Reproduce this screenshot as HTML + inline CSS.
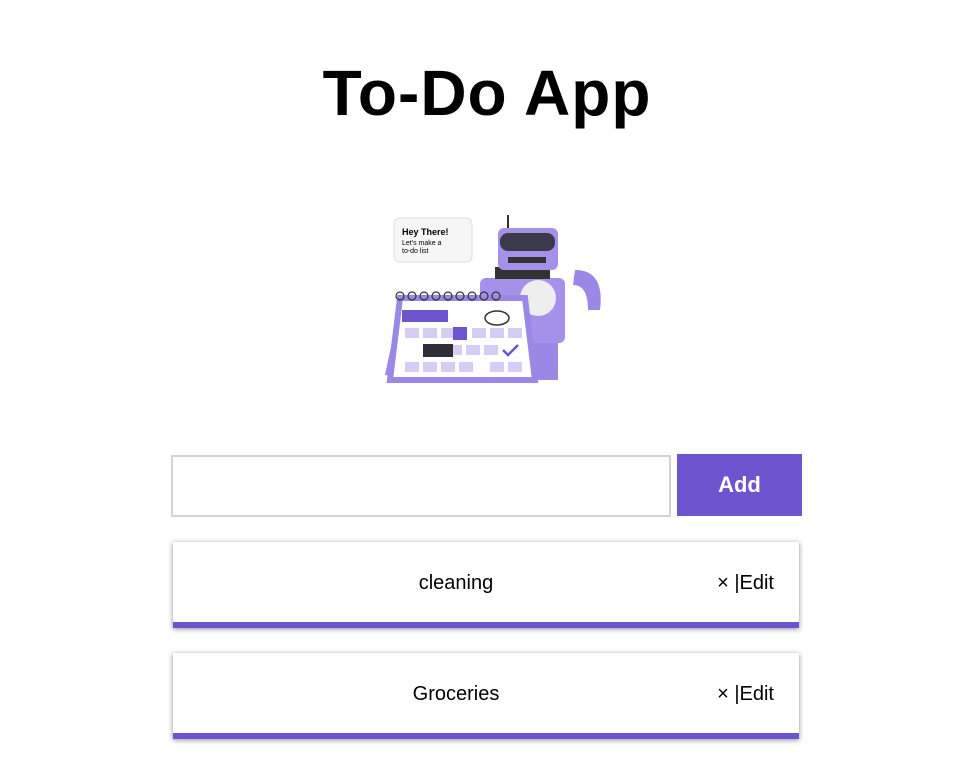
<!DOCTYPE html>
<html><head><style>
body{margin:0;background:#fff;font-family:"Liberation Sans",sans-serif;width:962px;height:758px;position:relative;overflow:hidden}
h1{position:absolute;top:56px;left:0;width:974px;text-align:center;margin:0;font-size:64px;font-weight:bold;letter-spacing:1px;color:#000}
.inp{position:absolute;left:171px;top:455px;width:496px;height:58px;border:2px solid #d3d3d3;box-sizing:content-box}
.btn{position:absolute;left:677px;top:454px;width:125px;height:62px;background:#6e55cf;color:#fff;font-size:22px;font-weight:bold;text-align:center;line-height:62px}
.item{position:absolute;left:173px;width:626px;height:80px;background:#fff;border-bottom:6px solid #6e55cf;box-shadow:0 1px 5px rgba(0,0,0,.45)}
.item .t{position:absolute;left:0;width:566px;text-align:center;top:30px;font-size:20px}
.item .a{position:absolute;right:25px;top:30px;font-size:20px}
</style></head><body>
<h1>To-Do App</h1>
<svg style="position:absolute;left:360px;top:200px" width="250" height="190" viewBox="0 0 250 190">
<rect x="34" y="18" width="78" height="44" rx="6" fill="#f6f6f6" stroke="#ddd"/>
<text x="42" y="35" font-size="9" font-weight="bold" font-family="Liberation Sans">Hey There!</text>
<text x="42" y="45" font-size="7" font-family="Liberation Sans">Let's make a</text>
<text x="42" y="53" font-size="7" font-family="Liberation Sans">to-do list</text>
<path d="M215 70 q30 0 25 40 l-12 0 q0 -25 -15 -25z" fill="#9b87e6"/>
<rect x="170" y="140" width="28" height="40" fill="#9b87e6"/>
<rect x="120" y="78" width="85" height="65" rx="6" fill="#a591ea"/>
<rect x="135" y="67" width="55" height="12" fill="#333"/>
<rect x="138" y="28" width="60" height="42" rx="6" fill="#a591ea"/>
<rect x="140" y="33" width="55" height="18" rx="8" fill="#3a3a4a"/>
<rect x="148" y="57" width="38" height="6" fill="#333"/>
<circle cx="178" cy="98" r="18" fill="#eee"/>
<line x1="148" y1="28" x2="148" y2="15" stroke="#333" stroke-width="2"/>
<path d="M25 175 L42 95 L60 100 L60 180z" fill="#9b87e6"/>
<path d="M40 98 L165 98 L175 180 L30 180z" fill="#fff" stroke="#9b87e6" stroke-width="6"/>
<rect x="42" y="110" width="46" height="12" fill="#6e55cf"/>
<g fill="#d6cdf6">
<rect x="45" y="128" width="14" height="10"/><rect x="63" y="128" width="14" height="10"/><rect x="81" y="128" width="14" height="10"/><rect x="112" y="128" width="14" height="10"/><rect x="130" y="128" width="14" height="10"/><rect x="148" y="128" width="14" height="10"/>
<rect x="88" y="145" width="14" height="10"/><rect x="106" y="145" width="14" height="10"/><rect x="124" y="145" width="14" height="10"/>
<rect x="45" y="162" width="14" height="10"/><rect x="63" y="162" width="14" height="10"/><rect x="81" y="162" width="14" height="10"/><rect x="99" y="162" width="14" height="10"/><rect x="130" y="162" width="14" height="10"/><rect x="148" y="162" width="14" height="10"/>
</g>
<rect x="93" y="127" width="14" height="13" fill="#6e55cf"/>
<rect x="63" y="144" width="30" height="13" fill="#2e2e38"/>
<ellipse cx="137" cy="118" rx="12" ry="7" fill="none" stroke="#333" stroke-width="1.5"/>
<path d="M143 150 l5 5 l10 -10" stroke="#6e55cf" stroke-width="2.5" fill="none"/>
<g fill="none" stroke="#333" stroke-width="1.2"><circle cx="40" cy="96" r="4"/><circle cx="52" cy="96" r="4"/><circle cx="64" cy="96" r="4"/><circle cx="76" cy="96" r="4"/><circle cx="88" cy="96" r="4"/><circle cx="100" cy="96" r="4"/><circle cx="112" cy="96" r="4"/><circle cx="124" cy="96" r="4"/><circle cx="136" cy="96" r="4"/></g>
</svg>
<div class="inp"></div>
<div class="btn">Add</div>
<div class="item" style="top:542px"><div class="t">cleaning</div><div class="a">× |Edit</div></div>
<div class="item" style="top:653px"><div class="t">Groceries</div><div class="a">× |Edit</div></div>
</body></html>
